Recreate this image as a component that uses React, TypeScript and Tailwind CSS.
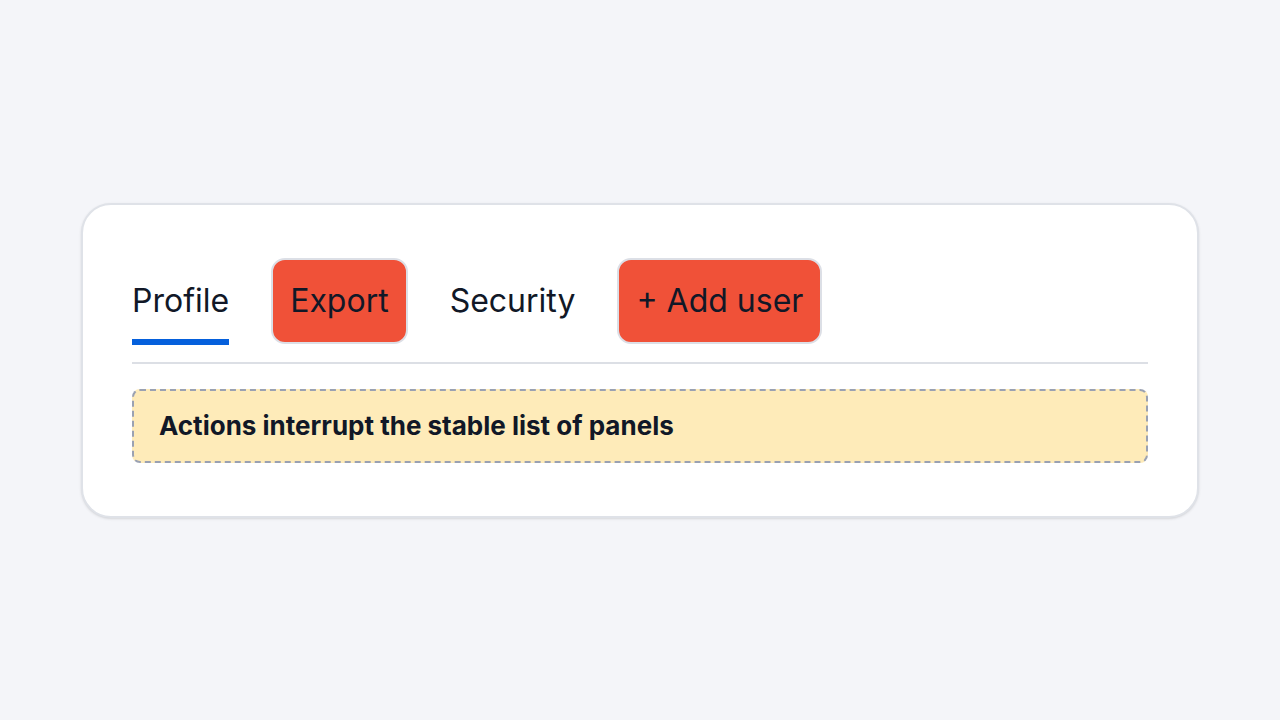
import { useState } from 'react';

const tabs = [
    { id: 'profile', label: 'Profile', kind: 'tab' },
    { id: 'export', label: 'Export', kind: 'action' },
    { id: 'security', label: 'Security', kind: 'tab' },
    { id: 'add', label: '+ Add user', kind: 'action' },
] as const;

export default function App() {
    const [active, setActive] = useState('profile');

    return (
        <div
            className="min-h-screen w-full flex items-center justify-center bg-[#f4f5f9]"
            style={{ fontFamily: "'Inter', 'Liberation Sans', sans-serif" }}
        >
            <div className="w-[1118px] bg-white border-2 border-[#dfe2e8] rounded-[30px] shadow-sm pt-[53px] pb-[53px] pl-[49px] pr-[49px]">
                <div className="flex items-start gap-[42px] pb-[17px] border-b-2 border-[#dcdfe5]">
                    {tabs.map(item =>
                        item.kind === 'tab' ? (
                            <button
                                key={item.id}
                                onClick={() => setActive(item.id)}
                                className={`pt-[21px] pb-[16px] border-b-[6px] text-[32px] leading-[44px] text-[#111827] ${active === item.id ? 'border-[#0560dc]' : 'border-transparent'
                                    }`}
                            >
                                {item.label}
                            </button>
                        ) : (
                            <button
                                key={item.id}
                                className="px-[17px] py-[19px] border-2 border-[#dcdfe6] rounded-[14px] bg-[#f05138] text-[32px] leading-[44px] text-[#111827]"
                            >
                                {item.label}
                            </button>
                        )
                    )}
                </div>

                <div className="mt-[25px] border-2 border-dashed border-[#9aa1b2] rounded-[8px] bg-[#feebb9] px-[25px] py-[17px]">
                    <p className="text-[26px] leading-9 font-bold text-[#111827]">
                        Actions interrupt the stable list of panels
                    </p>
                </div>
            </div>
        </div>
    );
}
